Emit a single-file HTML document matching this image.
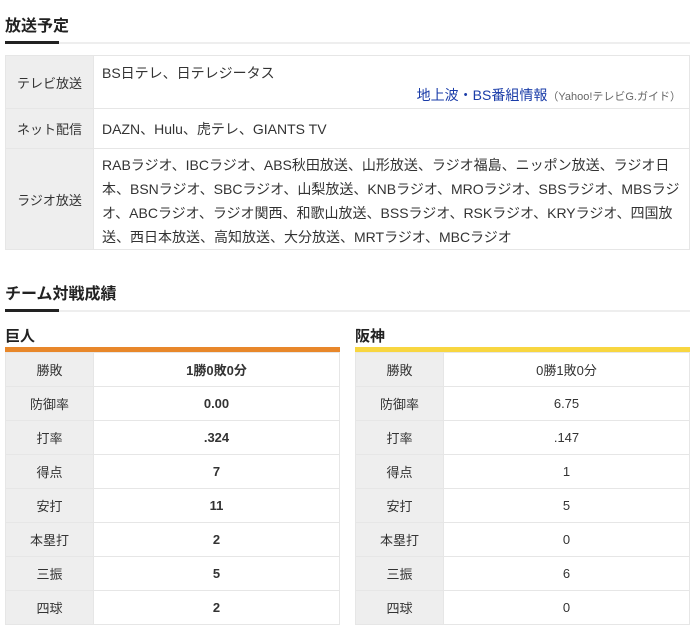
<!DOCTYPE html>
<html><head><meta charset="utf-8"><style>
*{margin:0;padding:0;box-sizing:border-box}
body{width:700px;height:634px;background:#fff;font-family:"Liberation Sans","Noto Sans CJK JP",sans-serif;color:#333;font-size:14px;position:relative;overflow:hidden}
h2{position:absolute;left:5px;font-size:16px;font-weight:bold;color:#222}
.ul{position:absolute;left:5px;width:685px;height:2px;background:#eee}
.ul::before{content:"";position:absolute;left:0;top:-1px;width:54px;height:3px;background:#222}
table{border-collapse:collapse;position:absolute}
td{border:1px solid #e6e6e6}
.t1 td.l{background:#eee;width:88px;text-align:center;font-size:13px}
.t1 td.v{padding:0 8px;line-height:24px;vertical-align:top}
.team{position:absolute;font-size:15px;font-weight:bold;color:#222}
.bar{position:absolute;height:5px}
.t2 td{height:34px;text-align:center;font-size:13px}
.t2 td.l{background:#eee;width:88px}
.b td.v{font-weight:bold}
</style></head><body>
<h2 style="top:12px">放送予定</h2>
<div class="ul" style="top:42px"></div>
<table class="t1" style="left:5px;top:55px;width:685px">
<tr style="height:53px"><td class="l">テレビ放送</td><td class="v" style="padding-top:5px;height:53px">BS日テレ、日テレジータス<div style="text-align:right;line-height:20px;margin-top:0"><span style="color:#1a3ca8">地上波・BS番組情報</span><span style="font-size:11px;color:#666">（Yahoo!テレビG.ガイド）</span></div></td></tr>
<tr style="height:40px"><td class="l">ネット配信</td><td class="v" style="vertical-align:middle">DAZN、Hulu、虎テレ、GIANTS TV</td></tr>
<tr style="height:99px"><td class="l">ラジオ放送</td><td class="v" style="padding-top:4px;height:99px">RABラジオ、IBCラジオ、ABS秋田放送、山形放送、ラジオ福島、ニッポン放送、ラジオ日本、BSNラジオ、SBCラジオ、山梨放送、KNBラジオ、MROラジオ、SBSラジオ、MBSラジオ、ABCラジオ、ラジオ関西、和歌山放送、BSSラジオ、RSKラジオ、KRYラジオ、四国放送、西日本放送、高知放送、大分放送、MRTラジオ、MBCラジオ</td></tr>
</table>
<h2 style="top:280px">チーム対戦成績</h2>
<div class="ul" style="top:310px"></div>
<div class="team" style="left:5px;top:325px">巨人</div>
<div class="bar" style="left:5px;top:347px;width:335px;background:#e8872a"></div>
<table class="t2 b" style="left:5px;top:352px;width:335px">
<tr><td class="l">勝敗</td><td class="v">1勝0敗0分</td></tr>
<tr><td class="l">防御率</td><td class="v">0.00</td></tr>
<tr><td class="l">打率</td><td class="v">.324</td></tr>
<tr><td class="l">得点</td><td class="v">7</td></tr>
<tr><td class="l">安打</td><td class="v">11</td></tr>
<tr><td class="l">本塁打</td><td class="v">2</td></tr>
<tr><td class="l">三振</td><td class="v">5</td></tr>
<tr><td class="l">四球</td><td class="v">2</td></tr>
</table>
<div class="team" style="left:355px;top:325px">阪神</div>
<div class="bar" style="left:355px;top:347px;width:335px;background:#f8d640"></div>
<table class="t2" style="left:355px;top:352px;width:335px">
<tr><td class="l">勝敗</td><td class="v">0勝1敗0分</td></tr>
<tr><td class="l">防御率</td><td class="v">6.75</td></tr>
<tr><td class="l">打率</td><td class="v">.147</td></tr>
<tr><td class="l">得点</td><td class="v">1</td></tr>
<tr><td class="l">安打</td><td class="v">5</td></tr>
<tr><td class="l">本塁打</td><td class="v">0</td></tr>
<tr><td class="l">三振</td><td class="v">6</td></tr>
<tr><td class="l">四球</td><td class="v">0</td></tr>
</table>
</body></html>
